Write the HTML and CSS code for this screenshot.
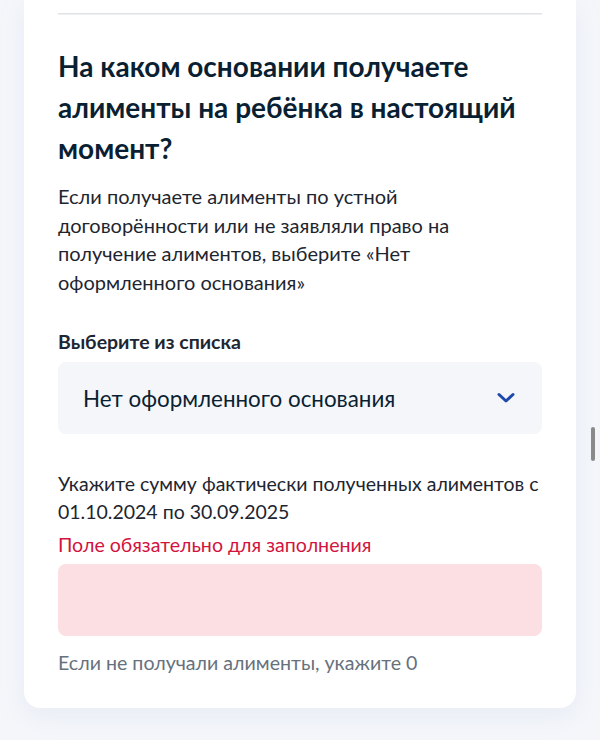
FILE: index.html
```html
<!DOCTYPE html>
<html lang="ru">
<head>
<meta charset="utf-8">
<link rel="stylesheet" href="styles.css">
</head>
<body>
<main class="page">
  <section class="card">
    <div class="divider"></div>
    <h2 class="title">На каком основании получаете алименты на ребёнка в настоящий момент?</h2>
    <p class="desc">Если получаете алименты по устной договорённости или не заявляли право на получение алиментов, выберите «Нет оформленного основания»</p>
    <div class="label">Выберите из списка</div>
    <div class="select">
      <span class="select-value">Нет оформленного основания</span>
      <svg class="chevron" width="18" height="12" viewBox="0 0 18 12"><path d="M2 2.5 L9 9 L16 2.5" fill="none" stroke="#1f48ab" stroke-width="3" stroke-linecap="round" stroke-linejoin="round"/></svg>
    </div>
    <p class="question">Укажите сумму фактически полученных алиментов с 01.10.2024 по 30.09.2025</p>
    <div class="error">Поле обязательно для заполнения</div>
    <div class="input-error"></div>
    <div class="hint">Если не получали алименты, укажите 0</div>
  </section>
</main>
<div class="scroll-thumb"></div>
</body>
</html>
```

FILE: styles.css
```css
html, body {
  margin: 0;
  padding: 0;
}
body {
  background: #f4f6fa;
  font-family: Lato, "Noto Sans", sans-serif;
  color: #0b1f33;
  width: 600px;
  height: 740px;
  overflow: hidden;
}
.page {
  padding: 0 24px;
}
.card {
  background: #ffffff;
  border-radius: 0 0 16px 16px;
  padding: 13px 34px 33px;
  box-shadow: 0 8px 24px rgba(180, 195, 220, 0.18);
  display: flex;
  flex-direction: column;
}
.divider {
  height: 1px;
  background: #dfe3e8;
  border-bottom: 1px solid #eef0f3;
}
.title {
  margin: 31px 0 0;
  font-size: 28px;
  line-height: 41px;
  font-weight: 700;
  color: #0b1f33;
}
.desc {
  margin: 13px 0 0;
  font-size: 20px;
  line-height: 28.5px;
  color: #1d2530;
}
.label {
  margin-top: 33.5px;
  font-size: 19.5px;
  line-height: 24px;
  font-weight: 700;
  color: #1d2733;
}
.select {
  margin-top: 8.5px;
  height: 72px;
  background: #f4f6fa;
  border-radius: 8px;
  display: flex;
  align-items: center;
  justify-content: space-between;
  padding: 0 27px 0 25px;
}
.select-value {
  font-size: 22.4px;
  color: #0b1f33;
}
.chevron {
  display: block;
}
.question {
  margin: 35.5px 0 0;
  font-size: 19.5px;
  line-height: 28px;
  color: #1d2530;
}
.error {
  margin-top: 7px;
  font-size: 19.6px;
  line-height: 24px;
  color: #d2133e;
}
.input-error {
  margin-top: 7.5px;
  height: 72px;
  background: #fbdfe2;
  border-radius: 8px;
}
.hint {
  margin-top: 14.5px;
  font-size: 19.6px;
  line-height: 24px;
  color: #66717d;
}
.scroll-thumb {
  position: absolute;
  left: 591px;
  top: 427px;
  width: 4px;
  height: 34px;
  border-radius: 2px;
  background: #8a8a8a;
}
```
